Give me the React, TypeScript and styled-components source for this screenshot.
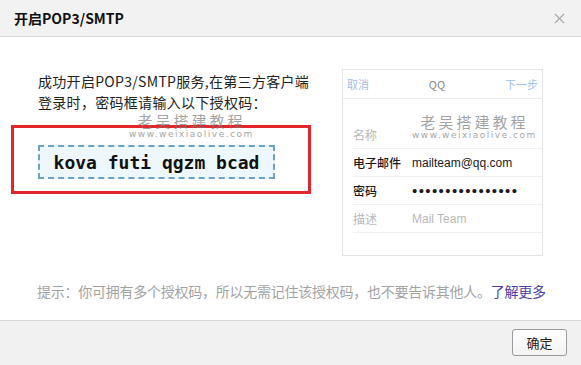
import React from "react";
import styled, { createGlobalStyle } from "styled-components";
import { X } from "lucide-react";

const GlobalStyle = createGlobalStyle`
  html, body {
    margin: 0;
    padding: 0;
    background: #ffffff;
  }
  * {
    box-sizing: border-box;
  }
`;

const Dialog = styled.div`
  position: relative;
  width: 581px;
  height: 365px;
  display: flex;
  flex-direction: column;
  background: #ffffff;
  font-family: "Noto Sans CJK SC", "Noto Sans", sans-serif;
  overflow: hidden;
`;

const Header = styled.div`
  height: 37px;
  flex-shrink: 0;
  display: flex;
  align-items: center;
  justify-content: space-between;
  padding: 0 13px 0 14px;
  background: #f2f2f2;
  border-bottom: 1px solid #dcdcdc;
`;

const Title = styled.h1`
  margin: 0;
  font-size: 14px;
  font-weight: 700;
  color: #111;
  line-height: 20px;
`;

const CloseButton = styled.button`
  border: none;
  background: none;
  padding: 0;
  display: flex;
  color: #a8a8a8;
  cursor: pointer;
`;

const Body = styled.div`
  flex: 1;
  display: flex;
  flex-direction: column;
  padding: 33px 38px 0 38px;
`;

const Top = styled.div`
  display: flex;
  justify-content: space-between;
  align-items: flex-start;
`;

const LeftCol = styled.div`
  display: flex;
  flex-direction: column;
  padding-top: 1px;
`;

const Intro = styled.p`
  margin: 0;
  font-size: 14px;
  line-height: 21px;
  color: #222;
  width: 280px;
  letter-spacing: 0.3px;
`;

const RedFrame = styled.div`
  margin: 12px 0 0 -27px;
  width: 300px;
  height: 69px;
  border: 3px solid #e3262b;
  padding: 17px 0 0 24px;
`;

const CodeBox = styled.div`
  width: 237px;
  height: 34px;
  display: flex;
  align-items: center;
  justify-content: center;
  background: #eef7fc;
  border: 2px dashed #6aa3c4;
  font-family: "DejaVu Sans Mono", monospace;
  font-weight: 700;
  font-size: 18px;
  color: #111;
`;

const Phone = styled.div`
  width: 201px;
  height: 187px;
  margin-top: -1px;
  border: 1px solid #e4e4e4;
  display: flex;
  flex-direction: column;
`;

const PhoneBar = styled.div`
  height: 29px;
  display: flex;
  align-items: center;
  justify-content: space-between;
  padding: 0 4px 0 4px;
  border-bottom: 1px solid #ececec;
  font-size: 11px;
`;

const BarLink = styled.span`
  color: #9fc1e6;
`;

const BarTitle = styled.span`
  color: #8a8a8a;
  font-size: 11px;
`;

const Rows = styled.div`
  margin-top: 22px;
  padding-left: 10px;
`;

const Row = styled.div`
  height: 28px;
  display: flex;
  align-items: center;
  border-bottom: 1px solid #f0f0f0;
  font-size: 12px;
`;

const Label = styled.span<{ $strong?: boolean }>`
  width: 59px;
  flex-shrink: 0;
  color: ${(p) => (p.$strong ? "#1a1a1a" : "#b8b8b8")};
  font-weight: ${(p) => (p.$strong ? 500 : 400)};
`;

const Value = styled.span<{ $muted?: boolean }>`
  color: ${(p) => (p.$muted ? "#b8b8b8" : "#1a1a1a")};
  font-family: "Liberation Sans", sans-serif;
  font-size: 12px;
`;

const Dots = styled.span`
  color: #1a1a1a;
  font-family: "Liberation Sans", sans-serif;
  font-size: 15px;
  letter-spacing: 1.4px;
  white-space: nowrap;
`;

const Hint = styled.p`
  margin: 25px 0 0 -1px;
  font-size: 14px;
  line-height: 20px;
  color: #a3a3a3;
  white-space: nowrap;
  letter-spacing: -0.25px;
`;

const MoreLink = styled.a`
  color: #4f3ea3;
  text-decoration: none;
`;

const Footer = styled.div`
  height: 45px;
  flex-shrink: 0;
  display: flex;
  align-items: center;
  justify-content: flex-end;
  padding: 0 14px 2px 0;
  background: #f1f1f1;
  border-top: 1px solid #d8d8d8;
`;

const OkButton = styled.button`
  width: 55px;
  height: 27px;
  border: 1px solid #9a9a9a;
  border-radius: 3px;
  background: linear-gradient(#ffffff, #f3f3f3);
  font-family: "Noto Sans CJK SC", sans-serif;
  font-size: 13px;
  color: #222;
  padding: 0;
`;

const Watermark = styled.div<{ $x: number; $y: number }>`
  position: absolute;
  left: ${(p) => p.$x}px;
  top: ${(p) => p.$y}px;
  display: flex;
  flex-direction: column;
  align-items: center;
  pointer-events: none;
  color: rgba(120, 120, 120, 0.7);
`;

const MarkTitle = styled.span`
  font-size: 15px;
  line-height: 17px;
  letter-spacing: 3px;
`;

const MarkUrl = styled.span`
  font-family: "DejaVu Sans", sans-serif;
  font-size: 9px;
  line-height: 11px;
  letter-spacing: 1.5px;
`;

function Mark({ x, y }: { x: number; y: number }) {
  return (
    <Watermark $x={x} $y={y}>
      <MarkTitle>老吴搭建教程</MarkTitle>
      <MarkUrl>www.weixiaolive.com</MarkUrl>
    </Watermark>
  );
}

export default function App() {
  return (
    <Dialog>
      <GlobalStyle />
      <Header>
        <Title>开启POP3/SMTP</Title>
        <CloseButton aria-label="关闭">
          <X size={17} strokeWidth={1.6} />
        </CloseButton>
      </Header>
      <Body>
        <Top>
          <LeftCol>
            <Intro>
              成功开启POP3/SMTP服务,在第三方客户端登录时，密码框请输入以下授权码：
            </Intro>
            <RedFrame>
              <CodeBox>kova futi qgzm bcad</CodeBox>
            </RedFrame>
          </LeftCol>
          <Phone>
            <PhoneBar>
              <BarLink>取消</BarLink>
              <BarTitle>QQ</BarTitle>
              <BarLink>下一步</BarLink>
            </PhoneBar>
            <Rows>
              <Row>
                <Label>名称</Label>
              </Row>
              <Row>
                <Label $strong>电子邮件</Label>
                <Value>mailteam@qq.com</Value>
              </Row>
              <Row>
                <Label $strong>密码</Label>
                <Dots>••••••••••••••••</Dots>
              </Row>
              <Row>
                <Label>描述</Label>
                <Value $muted>Mail Team</Value>
              </Row>
            </Rows>
          </Phone>
        </Top>
        <Hint>
          提示：你可拥有多个授权码，所以无需记住该授权码，也不要告诉其他人。
          <MoreLink href="#">了解更多</MoreLink>
        </Hint>
      </Body>
      <Footer>
        <OkButton>确定</OkButton>
      </Footer>
      <Mark x={129} y={112} />
      <Mark x={412} y={113} />
    </Dialog>
  );
}
